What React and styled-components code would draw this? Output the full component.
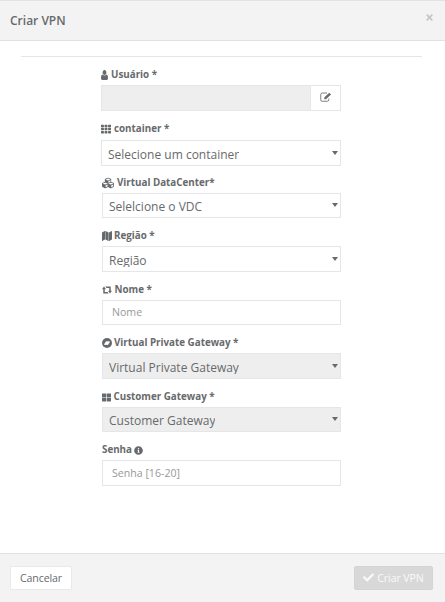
import React from 'react';
import styled, { createGlobalStyle } from 'styled-components';
import { FaTh, FaCubes, FaThLarge, FaInfoCircle, FaCheck } from 'react-icons/fa';

const GlobalStyle = createGlobalStyle`
  * { box-sizing: border-box; }
  body { margin: 0; background: #fff; color: #676a6c; font-family: "Open Sans", sans-serif; }
`;

const Modal = styled.main`
  display: flex;
  flex-direction: column;
  width: 445px;
  height: 602px;
  overflow: hidden;
`;

const Header = styled.header`
  display: flex;
  justify-content: space-between;
  height: 41px;
  flex: none;
  padding: 0 12px 0 10px;
  background: #f3f3f3;
  border-top: 1px solid #e2e2e2;
  border-bottom: 1px solid #e2e2e2;
`;

const Title = styled.h1`
  margin: 0;
  font-size: 12px;
  font-weight: 600;
  line-height: 39px;
`;

const Close = styled.button`
  display: flex;
  align-items: flex-start;
  padding: 13px 0 0;
  border: 0;
  background: none;
  color: #c6c6c6;
`;

const Body = styled.section`
  flex: 1;
  padding: 15px 23px 0 21px;
`;

const Rule = styled.hr`
  height: 1px;
  margin: 0;
  border: 0;
  background: #e5e6e7;
`;

const Form = styled.form`
  display: flex;
  flex-direction: column;
  width: 240px;
  margin: 10px 0 0 80px;
`;

const Field = styled.div`
  display: flex;
  flex-direction: column;
  height: ${p => p.$height}px;
  padding-left: ${p => p.$inset || 0}px;
`;

const Label = styled.label`
  display: flex;
  align-items: center;
  gap: ${p => p.$gap ?? 3}px;
  height: 16px;
  margin-bottom: ${p => p.$space ?? 2}px;
  font-size: 9.8px;
  font-weight: 700;
  line-height: 16px;
  white-space: nowrap;
  svg { flex: none; }
`;

const Control = styled.div`
  display: flex;
  flex: none;
  justify-content: space-between;
  height: ${p => p.$height}px;
  border: 1px solid #e5e6e7;
  background: ${p => (p.$disabled ? '#eee' : '#fff')};
`;

const Value = styled.span`
  height: ${p => p.$clip}px;
  margin: ${p => p.$top}px 0 0 6px;
  overflow: hidden;
  font-size: 12px;
  line-height: 19px;
  white-space: nowrap;
`;

const Arrow = styled.svg`
  width: 6px;
  height: 4px;
  margin: ${p => p.$top}px 2px 0 0;
  fill: #676a6c;
`;

const Input = styled.input`
  height: ${p => p.$height}px;
  flex: none;
  width: 100%;
  padding: 0 9px 1px;
  border: 1px solid #e5e6e7;
  border-radius: 0;
  color: #676a6c;
  font: 10.6px "Open Sans", sans-serif;
  &::placeholder { color: #999; opacity: 1; }
`;

const EditButton = styled.button`
  display: flex;
  align-items: center;
  justify-content: center;
  width: 30px;
  padding: 0 0 2px;
  border: 0;
  border-left: 1px solid #e5e6e7;
  background: #fff;
  color: #676a6c;
`;

const Footer = styled.footer`
  display: flex;
  justify-content: space-between;
  height: 49px;
  flex: none;
  padding: 12px 12px 0 10px;
  background: #f3f3f3;
  border-top: 1px solid #e2e2e2;
`;

const Button = styled.button`
  display: flex;
  align-items: center;
  justify-content: center;
  gap: 3px;
  width: ${p => (p.$primary ? 79 : 62)}px;
  height: 24px;
  padding: 0 0 1px;
  border: 1px solid ${p => (p.$primary ? '#d4d4d4' : '#e7eaec')};
  border-radius: 2px;
  background: ${p => (p.$primary ? '#d8d8d8' : '#fff')};
  color: ${p => (p.$primary ? '#fafafa' : '#676a6c')};
  font: 10.6px "Open Sans", sans-serif;
  letter-spacing: -0.1px;
  white-space: nowrap;
`;

const UserIcon = () => (
  <svg width="7" height="10" viewBox="0 128 1408 1536" preserveAspectRatio="none" fill="currentColor">
    <path d="M1408 1405q0 120-73 189.5t-194 69.5h-874q-121 0-194-69.5t-73-189.5q0-53 3.5-103.5t14-109 26.5-108.5 43-97.5 62-81 85.5-53.5 111.5-20q9 0 42 21.5t74.5 48 108 48 133.5 21.5 133.5-21.5 108-48 74.5-48 42-21.5q61 0 111.5 20t85.5 53.5 62 81 43 97.5 26.5 108.5 14 109 3.5 103.5zm-320-893q0 159-112.5 271.5t-271.5 112.5-271.5-112.5-112.5-271.5 112.5-271.5 271.5-112.5 271.5 112.5 112.5 271.5z" />
  </svg>
);

const MapIcon = () => (
  <svg width="10" height="10" viewBox="0 0 1792 1792" fill="currentColor">
    <path d="M512 0q13 0 22.5 9.5t9.5 22.5v1472q0 20-17 28l-480 256q-7 4-15 4-13 0-22.5-9.5t-9.5-22.5v-1472q0-20 17-28l480-256q7-4 15-4zm1248 0q13 0 22.5 9.5t9.5 22.5v1472q0 20-17 28l-480 256q-7 4-15 4-13 0-22.5-9.5t-9.5-22.5v-1472q0-20 17-28l480-256q7-4 15-4zm-1120 0q8 0 14 3l512 256q18 10 18 29v1472q0 13-9.5 22.5t-22.5 9.5q-8 0-14-3l-512-256q-18-10-18-29v-1472q0-13 9.5-22.5t22.5-9.5z" />
  </svg>
);

const RetweetIcon = () => (
  <svg width="10" height="8" viewBox="0 0 20 16" fill="currentColor">
    <path d="M4 1 8 6.5H5.5V12H11L13.5 15H2.5V6.5H0ZM6.5 1H17.5V9.5H20L16 15 12 9.5H14.5V4H9Z" />
  </svg>
);

const EditIcon = () => (
  <svg width="12" height="10" viewBox="0 0 24 20" fill="none" stroke="currentColor">
    <path d="M14 2H4.5Q1.5 2 1.5 5V15.5Q1.5 18.5 4.5 18.5H14.5Q17.5 18.5 17.5 15.5V13" strokeWidth="1.7" />
    <path d="M8.5 14.5V11L18.500 1.500 22 5 12 14.500Z" fill="currentColor" stroke="none" />
  </svg>
);

const GatewayIcon = () => (
  <svg width="10" height="10" viewBox="0 0 20 20">
    <circle cx="10" cy="10" r="10" fill="currentColor" />
    <path d="M5 13 8 7.5H15L12 13Z" fill="#fff" stroke="#fff" strokeWidth="1.5" strokeLinejoin="round" />
  </svg>
);

const CloseIcon = () => (
  <svg width="7" height="7" viewBox="0 0 7 7" stroke="currentColor" strokeWidth="1.8">
    <path d="M.7.7 6.3 6.3M6.3.7.7 6.3" />
  </svg>
);

const Select = ({ children, height = 26, top = 4, clip = 16, disabled }) => (
  <Control $height={height} $disabled={disabled}>
    <Value $top={top} $clip={clip}>{children}</Value>
    <Arrow $top={height === 26 ? 10 : 9} viewBox="0 0 6 4"><path d="M0 0H6L3 4Z" /></Arrow>
  </Control>
);

export default function App() {
  return (
    <Modal>
      <GlobalStyle />
      <Header>
        <Title>Criar VPN</Title>
        <Close aria-label="Fechar"><CloseIcon /></Close>
      </Header>
      <Body>
        <Rule />
        <Form>
          <Field $height={54}>
            <Label><UserIcon />Usuário *</Label>
            <Control $height={26} $disabled>
              <span />
              <EditButton type="button" aria-label="Editar"><EditIcon /></EditButton>
            </Control>
          </Field>
          <Field $height={54}>
            <Label $space={3}><FaTh size={10} />container *</Label>
            <Select>Selecione um container</Select>
          </Field>
          <Field $height={53} $inset={1}>
            <Label><FaCubes size={12} />Virtual DataCenter*</Label>
            <Select height={25} top={3} clip={18}>Selelcione o VDC</Select>
          </Field>
          <Field $height={54} $inset={1}>
            <Label $gap={2}><MapIcon />Região *</Label>
            <Select>Região</Select>
          </Field>
          <Field $height={53} $inset={1}>
            <Label $gap={2.5}><RetweetIcon />Nome *</Label>
            <Input $height={25} placeholder="Nome" />
          </Field>
          <Field $height={54} $inset={1}>
            <Label $gap={2}><GatewayIcon />Virtual Private Gateway *</Label>
            <Select disabled>Virtual Private Gateway</Select>
          </Field>
          <Field $height={53} $inset={1}>
            <Label $gap={2.5}><FaThLarge size={9} />Customer Gateway *</Label>
            <Select height={25} top={3} clip={18} disabled>Customer Gateway</Select>
          </Field>
          <Field $height={45} $inset={1}>
            <Label $gap={2}>Senha<FaInfoCircle size={9} /></Label>
            <Input $height={26} placeholder="Senha [16-20]" />
          </Field>
        </Form>
      </Body>
      <Footer>
        <Button>Cancelar</Button>
        <Button $primary disabled><FaCheck size={11} />Criar VPN</Button>
      </Footer>
    </Modal>
  );
}
